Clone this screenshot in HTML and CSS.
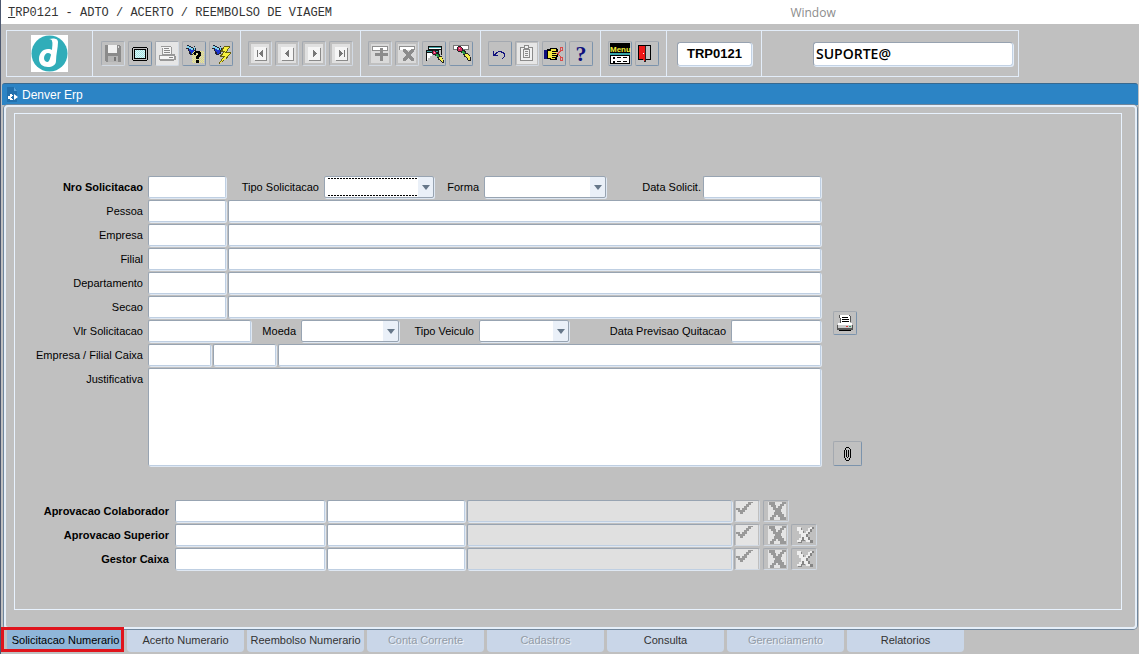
FILE: index.html
```
<!DOCTYPE html>
<html lang="pt-BR">
<head>
    <meta charset="UTF-8">
    <meta name="viewport" content="width=device-width, initial-scale=1.0">
    <title>TRP0121 - Adto / Acerto / Reembolso de Viagem</title>
    <link rel="stylesheet" href="styles.css">
</head>
<body>

    <!-- shared icon parts -->
    <svg class="symbols" aria-hidden="true">
        <defs>
            <symbol id="torch" viewBox="0 0 11 11">
                <path fill="#223" d="M1 0h2v1h2v1h2v1h1V1h1v2h1v3H9v3H7v1H4V9H3V6H2V4H0V3h1z"/>
                <path fill="#7fd4f0" d="M1 1h2v1h2v1h2v2H5V4H3V3H1zM8 2h1v3H8z"/>
                <path fill="#1c35d0" d="M3 4h2v1h3v3H7v1H5V7H4V6H3z"/>
            </symbol>
            <symbol id="pencil" viewBox="0 0 16 16">
                <path fill="#222" d="M2 0h3v1h1v1h1v2h2v1h1v2h2v1h1v1h1v2h1v4h-3v-1h-1v-2h-1v-1H8V9H7V7H5V6H2V5H1V1h1z"/>
                <path fill="#d8255c" d="M2 1h3v1h1v3H2z"/>
                <path fill="#f7b0c8" d="M3 2h1v1H3z"/>
                <path fill="#25a045" d="M6 5h2v1h1v2H7V7H6z"/>
                <path fill="#f4f04a" d="M9 8h3v1h1v1h1v4h-2v-2h-1v-1h-1v-1H9z"/>
            </symbol>
            <symbol id="check" viewBox="0 0 22 20">
                <path fill="#e4e4e4" d="M0 0h22v20H0z"/>
                <path fill="#999" d="M0 7h4v2h2V7h2V5h2V3h2V1h5v1h-2v2h-2v2h-2v3H9v2H7v2H4v-2H2v-2H0z"/>
            </symbol>
            <symbol id="cross" viewBox="0 0 22 20">
                <path fill="#e4e4e4" d="M3 1h18v18H3z"/>
                <path fill="#999" d="M4 1h6v3h1v3h2V5h2V3h2V1h4v2h-2v2h-2v3h-1v3h1v2h2v3h2v3h-6v-3h-2v-2h-2v2h-2v3H5v-3h2v-2h2v-3h1V9H8V6H6V4H4z"/>
            </symbol>
            <symbol id="crossLight" viewBox="0 0 22 20">
                <path fill="#858585" d="M5 3h4v3h2v3h3V7h2V4h2V2h3v2h-2v3h-2v2h-2v3h2v3h3v3h-3v-2h-3v-3h-2v3H9v2H5v-3h2v-2h2V9H7V6H5z"/>
                <path fill="#eee" d="M4 2h4v3h2v3h3V6h2V3h2V2h2v2h-2v3h-2v2h-2v3h2v3h2v2h-4v-2h-2v-3h-2v3H8v2H4v-2h2v-2h2V9H6V6H4z"/>
            </symbol>
        </defs>
    </svg>

    <header class="menubar">
        <a href="#" class="menu-title"><u>T</u>RP0121 - ADTO / ACERTO / REEMBOLSO DE VIAGEM</a>
        <a href="#" class="menu-window">Window</a>
    </header>

    <div class="toolbar">
        <div class="toolbar-box">
            <div class="logo-cell">
                <svg class="logo" viewBox="0 0 37 37" role="img" aria-label="Denver">
                    <circle cx="18.500" cy="18.500" r="18" fill="#30adb9"/>
                    <path fill="#fff" d="M18 4c4-1 9-1 9 3 0 6-2 12-2 19 0 4-4 6-8 6-5 0-9-3-9-8 0-6 4-10 9-10 2 0 3 0 4 1 0-3 1-7 0-9 0-1-1-2-3-2z"/>
                    <path fill="#30adb9" d="M17 18c2 0 3 1 3 2-1 3-1 5-3 7-3 0-4-2-4-4 0-3 2-5 4-5z"/>
                </svg>
            </div>
            <div class="tool-group">
                <button class="tool" aria-label="Salvar" disabled>
                    <svg viewBox="0 0 22 23"><path fill="#8b8b8b" d="M3 3h15v1h1v16H4v-1H3z"/><path fill="#f1f1f1" d="M6 3h9v8H6z"/><path fill="#b5b5b5" d="M6 14h10v6H6z"/><path fill="#777" d="M12 15h2v4h-2z"/><path fill="#ddd" d="M16 4h1v2h-1z"/></svg>
                </button>
                <button class="tool" aria-label="Tela">
                    <svg viewBox="0 0 22 23"><path d="M4 5h14v1h1v12h-1v1H4v-1H3V6h1z"/><path fill="#c0c0c0" d="M4 6h14v12H4z"/><path d="M5 7h12v10H5z"/><path fill="#9fe0e2" d="M6 8h10v8H6z"/><path fill="none" stroke="#dff6f6" stroke-dasharray="1 1" d="M6 8.500h10M7 9.500h9M6 10.500h10M7 11.500h9M6 12.500h10M7 13.500h9M6 14.500h10M7 15.500h9"/></svg>
                </button>
                <button class="tool" aria-label="Imprimir" disabled>
                    <svg viewBox="0 0 22 23"><path fill="#e6e6e6" d="M0 0h22v23H0z"/><path fill="#999" d="M5 4h10v1h1v7h3v2h1v4h-2v1H4v-1H3v-5h3V5H5z"/><path fill="#f6f6f6" d="M6 5h9v7H7V6H6zM4 14h14v3H4z"/><path fill="#888" d="M8 6h5v1H8zM8 8h6v1H8zM8 10h6v1H8zM13 15h4v1h-4z"/></svg>
                </button>
                <button class="tool" aria-label="Entrar consulta">
                    <svg viewBox="0 0 22 23"><use href="#torch" x="3" y="3" width="11" height="11"/><path fill="none" stroke="#f4ef7a" stroke-dasharray="1 1" d="M11 9.500h10M10 10.500h11M9 11.500h12M10 12.500h11M9 13.500h12M10 14.500h11M9 15.500h12M10 16.500h11M9 17.500h12M10 18.500h11M9 19.500h12M10 20.500h11"/><path d="M11 10h1V9h5v1h1v4h-1v1h-1v2h-3v-3h1v-1h1v-2h-2v2h-2zM13 18h3v3h-3z"/></svg>
                </button>
                <button class="tool" aria-label="Executar consulta">
                    <svg viewBox="0 0 22 23"><use href="#torch" x="2" y="3" width="11" height="11"/><path fill="#665f10" d="M14 4h6v1l-3 5h4v1l-4 4h2l-10 7v-1l4-6h-3v-1l3-4H11v-1z"/><path fill="#f8f03c" d="M14 5h5l-4 6h5l-5 5h2l-7 5 5-7h-3l3-5h-2z"/></svg>
                </button>
            </div>
            <div class="tool-group">
                <button class="tool" aria-label="Primeiro" disabled>
                    <svg viewBox="0 0 22 23"><path fill="#e0e0e0" d="M2 2h18v19H2z"/><path fill="#8a8a8a" d="M6 18h11V6h1v13H6z"/><path fill="#f5f5f5" d="M5 5h12v13H5z"/><path fill="#777" d="M8 8h1v7H8zM14 8v7h-1v-1h-1v-1h-1v-1h-1v-1h1v-1h1V9h1V8z"/></svg>
                </button>
                <button class="tool" aria-label="Anterior" disabled>
                    <svg viewBox="0 0 22 23"><path fill="#e0e0e0" d="M2 2h18v19H2z"/><path fill="#8a8a8a" d="M6 18h11V6h1v13H6z"/><path fill="#f5f5f5" d="M5 5h12v13H5z"/><path fill="#777" d="M13 8v7h-1v-1h-1v-1h-1v-1H9v-1h1v-1h1V9h1V8z"/></svg>
                </button>
                <button class="tool" aria-label="Proximo" disabled>
                    <svg viewBox="0 0 22 23"><path fill="#e0e0e0" d="M2 2h18v19H2z"/><path fill="#8a8a8a" d="M6 18h11V6h1v13H6z"/><path fill="#f5f5f5" d="M5 5h12v13H5z"/><path fill="#777" d="M10 8v7h1v-1h1v-1h1v-1h1v-1h-1v-1h-1V9h-1V8z"/></svg>
                </button>
                <button class="tool" aria-label="Ultimo" disabled>
                    <svg viewBox="0 0 22 23"><path fill="#e0e0e0" d="M2 2h18v19H2z"/><path fill="#8a8a8a" d="M6 18h11V6h1v13H6z"/><path fill="#f5f5f5" d="M5 5h12v13H5z"/><path fill="#777" d="M14 8h1v7h-1zM9 8v7h1v-1h1v-1h1v-1h1v-1h-1v-1h-1V9h-1V8z"/></svg>
                </button>
            </div>
            <div class="tool-group">
                <button class="tool" aria-label="Inserir" disabled>
                    <svg viewBox="0 0 22 23"><path fill="#dadada" d="M2 2h18v19H2z"/><path fill="#8f8f8f" d="M3 4h16v5H3z"/><path fill="#fff" d="M4 5h14v3H4z"/><path fill="#8c8c8c" d="M11 6h3v5h5v3h-5v5h-3v-5H6v-3h5z"/></svg>
                </button>
                <button class="tool" aria-label="Remover" disabled>
                    <svg viewBox="0 0 22 23"><path fill="#dadada" d="M2 2h18v19H2z"/><path fill="#8f8f8f" d="M3 4h16v4H3z"/><path fill="#fff" d="M4 5h14v3H4z"/><path fill="#8c8c8c" d="M7 7h3v1h1v1h1v1h1V9h1V8h1V7h3v3h-1v1h-1v1h-1v2h1v1h1v1h1v3h-3v-1h-1v-1h-1v-1h-1v1h-1v1h-1v1H7v-3h1v-1h1v-1h1v-2H9v-1H8v-1H7z"/></svg>
                </button>
                <button class="tool" aria-label="Limpar bloco">
                    <svg viewBox="0 0 22 23"><path fill="#111" d="M5 4h14v9h-1V8H5zM3 8h13v4H3zM3 12h1v7H3z"/><path fill="#3fa5a6" d="M6 5h12v1H6zM4 9h11v1H4z"/><path fill="#fff" d="M6 6h12v1H6zM4 11h9v1H9v2H7v2H5v2H4z"/><use href="#pencil" x="8" y="8" width="14" height="14"/></svg>
                </button>
                <button class="tool" aria-label="Limpar registro">
                    <svg viewBox="0 0 22 23"><path fill="#777" d="M3 3h16v5H3z"/><path fill="#fff" d="M4 4h14v3H4z"/><use href="#pencil" x="6" y="4" width="16" height="16"/></svg>
                </button>
            </div>
            <div class="tool-group">
                <button class="tool" aria-label="Desfazer">
                    <svg viewBox="0 0 22 23"><path fill="#10107c" d="M4 9h1v3h1v-1h1v-1h2V9h4v1h2v1h1v4h-1v1h-1v1h-1v-1h1v-1h1v-3h-1v-1h-2v-1h-3v1H8v1H7v1h2v1H4z"/></svg>
                </button>
                <button class="tool" aria-label="Colar" disabled>
                    <svg viewBox="0 0 22 23"><path fill="#e6e6e6" d="M1 1h20v21H1z"/><path fill="#8b8b8b" d="M4 5h4V3h5v2h4v14H4z"/><path fill="#f2f2f2" d="M5 6h3v2h5V6h3v12H5zM9 4h3v2H9z"/><path fill="#8b8b8b" d="M7 7h7v9H7z"/><path fill="#f2f2f2" d="M8 8h5v7H8z"/><path fill="#8b8b8b" d="M9 9h3v1H9zM9 11h3v1H9zM9 13h3v1H9z"/></svg>
                </button>
                <button class="tool" aria-label="Lista de valores">
                    <svg viewBox="0 0 22 23"><path fill="#10107c" d="M1 8h3v9H1z"/><path d="M4 7h3V6h7v1h1v3h-1v2h1v3h-1v3H7v-1H4z"/><path fill="#f2e640" d="M5 9h3V7h5v2H9v1h5v1H9v1h5v1H9v1h4v1H9v1h3v1H8v-1H5z"/><path fill="none" stroke="#d94a4a" d="M13 11.500h2l3-3M15 11.500l3 4M17.500 5.500h2v3h-2zM17.500 15.500h2v3h-2z"/></svg>
                </button>
                <button class="tool tool-help" aria-label="Ajuda">?</button>
            </div>
            <div class="tool-group">
                <button class="tool" aria-label="Menu">
                    <svg viewBox="0 0 22 23"><path d="M1 1h20v10H1z"/><text class="menu-glyph" x="1" y="10">Menu</text><path fill="#35a5a8" d="M1 11h20v2H1z"/><path d="M1 13h20v9H1z"/><path fill="#fff" d="M2 14h18v7H2z"/><path d="M4 15h2v2H4zM8 15h4v1H8zM14 15h4v1h-4zM4 19h2v2H4zM8 19h4v1H8zM14 19h4v1h-4z"/></svg>
                </button>
                <button class="tool" aria-label="Sair">
                    <svg viewBox="0 0 22 23"><path d="M2 3h13v15H2z"/><path fill="#c0c0c0" d="M9 4h5v13H9z"/><path fill="#222" d="M8 4h2v16H8z"/><path fill="#ee1717" d="M3 4h5l1 1v14H8l-2-2H3z"/><path fill="#fff" d="M7 11h1v1H7z"/></svg>
                </button>
            </div>
            <div class="code-cell">
                <input type="text" class="tool-input" aria-label="Programa" value="TRP0121">
            </div>
            <div class="user-cell">
                <input type="text" class="tool-input user-input" aria-label="Usuario" value="SUPORTE@">
            </div>
        </div>
    </div>

    <div class="titlebar">
        <svg class="title-icon" viewBox="0 0 12 15"><path fill="#2270ad" d="M0 0h7l3 3v12H0z"/><path fill="#5aa4da" d="M7 0l3 4H7z"/><path fill="#fff" d="M3 7h2v1h1v1H5v1H4v1h1v1h1v1H3v-1H1V9h2zM7 7l4 3-4 3z"/></svg>
        <span>Denver Erp</span>
    </div>

    <main class="window">
        <form class="panel">
            <div class="request">
                <div class="rows">
                    <div class="row">
                        <label class="label bold" for="nro">Nro Solicitacao</label>
                        <input type="text" class="field code" id="nro">
                        <label class="mid-label w98" for="tipo">Tipo Solicitacao</label>
                        <select class="field select-110 focused" id="tipo"><option></option></select>
                        <label class="mid-label w50" for="forma">Forma</label>
                        <select class="field select-122" id="forma"><option></option></select>
                        <label class="mid-label push narrow-gap" for="dataSolicit">Data Solicit.</label>
                        <input type="text" class="field date-118" id="dataSolicit">
                    </div>
                    <div class="row">
                        <label class="label" for="pessoa">Pessoa</label>
                        <input type="text" class="field code" id="pessoa">
                        <input type="text" class="field grow" aria-label="Nome da pessoa">
                    </div>
                    <div class="row">
                        <label class="label" for="empresa">Empresa</label>
                        <input type="text" class="field code" id="empresa">
                        <input type="text" class="field grow" aria-label="Nome da empresa">
                    </div>
                    <div class="row">
                        <label class="label" for="filial">Filial</label>
                        <input type="text" class="field code" id="filial">
                        <input type="text" class="field grow" aria-label="Nome da filial">
                    </div>
                    <div class="row">
                        <label class="label" for="depto">Departamento</label>
                        <input type="text" class="field code" id="depto">
                        <input type="text" class="field grow" aria-label="Nome do departamento">
                    </div>
                    <div class="row">
                        <label class="label" for="secao">Secao</label>
                        <input type="text" class="field code" id="secao">
                        <input type="text" class="field grow" aria-label="Nome da secao">
                    </div>
                    <div class="row">
                        <label class="label" for="vlr">Vlr Solicitacao</label>
                        <input type="text" class="field value" id="vlr">
                        <label class="mid-label w50" for="moeda">Moeda</label>
                        <select class="field select-98" id="moeda"><option></option></select>
                        <label class="mid-label w80" for="veiculo">Tipo Veiculo</label>
                        <select class="field select-90" id="veiculo"><option></option></select>
                        <label class="mid-label push" for="dataPrev">Data Previsao Quitacao</label>
                        <input type="text" class="field date-90" id="dataPrev">
                    </div>
                    <div class="row">
                        <label class="label" for="caixa">Empresa / Filial Caixa</label>
                        <input type="text" class="field small" id="caixa">
                        <input type="text" class="field small" aria-label="Filial caixa">
                        <input type="text" class="field grow" aria-label="Nome do caixa">
                    </div>
                    <div class="row row-area">
                        <label class="label" for="just">Justificativa</label>
                        <textarea class="field grow" id="just"></textarea>
                    </div>
                </div>
                <div class="side">
                    <button type="button" class="side-button" aria-label="Imprimir solicitacao">
                        <svg viewBox="0 0 22 22"><path fill="#555" d="M5 3h11v1h1v6h-1v1H6V6H5z"/><path fill="#fff" d="M6 3h9v1h1v7H7V6H6z"/><path d="M8 5h6v1H8zM8 7h7v1H8zM8 9h7v1H8z"/><path fill="#fff" d="M4 11h14v2H4z"/><path fill="#555" d="M3 13h16v5H3z"/><path fill="#ccc" d="M4 13h14v3H4z"/><path fill="#d33" d="M12 14h2v1h-2z"/><path fill="#396" d="M15 14h2v1h-2z"/><path d="M5 18h12v1H5z"/></svg>
                    </button>
                    <button type="button" class="side-button clip" aria-label="Anexar">
                        <svg viewBox="0 0 22 22"><path d="M10 4h3v1h1v1h1v9h-1v2h-1v1h-3v-1H9v-2H8V7h1v8h1v2h3v-2h1V6h-1V5h-3zM9 5h1v2H9zM10 7h1v7h-1zM12 7h1v7h-1zM11 14h1v1h-1z"/></svg>
                    </button>
                </div>
            </div>

            <div class="approvals">
                <div class="row">
                    <label class="label bold" for="apColab">Aprovacao Colaborador</label>
                    <input type="text" class="field ap-user" id="apColab">
                    <input type="text" class="field ap-date" aria-label="Data aprovacao colaborador">
                    <input type="text" class="field grow" aria-label="Nome do colaborador" disabled>
                    <div class="actions">
                        <button type="button" class="action" aria-label="Aprovar" disabled><svg viewBox="0 0 22 20"><use href="#check"/></svg></button>
                        <button type="button" class="action" aria-label="Reprovar" disabled><svg viewBox="0 0 22 20"><use href="#cross"/></svg></button>
                    </div>
                </div>
                <div class="row">
                    <label class="label bold" for="apSup">Aprovacao Superior</label>
                    <input type="text" class="field ap-user" id="apSup">
                    <input type="text" class="field ap-date" aria-label="Data aprovacao superior">
                    <input type="text" class="field grow" aria-label="Nome do superior" disabled>
                    <div class="actions">
                        <button type="button" class="action" aria-label="Aprovar" disabled><svg viewBox="0 0 22 20"><use href="#check"/></svg></button>
                        <button type="button" class="action" aria-label="Reprovar" disabled><svg viewBox="0 0 22 20"><use href="#cross"/></svg></button>
                        <button type="button" class="action" aria-label="Cancelar" disabled><svg viewBox="0 0 22 20"><use href="#crossLight"/></svg></button>
                    </div>
                </div>
                <div class="row">
                    <label class="label bold" for="gestor">Gestor Caixa</label>
                    <input type="text" class="field ap-user" id="gestor">
                    <input type="text" class="field ap-date" aria-label="Data gestor caixa">
                    <input type="text" class="field grow" aria-label="Nome do gestor" disabled>
                    <div class="actions">
                        <button type="button" class="action" aria-label="Aprovar" disabled><svg viewBox="0 0 22 20"><use href="#check"/></svg></button>
                        <button type="button" class="action" aria-label="Reprovar" disabled><svg viewBox="0 0 22 20"><use href="#cross"/></svg></button>
                        <button type="button" class="action" aria-label="Cancelar" disabled><svg viewBox="0 0 22 20"><use href="#crossLight"/></svg></button>
                    </div>
                </div>
            </div>
        </form>
    </main>

    <nav class="tabs">
        <button class="tab active">Solicitacao Numerario</button>
        <button class="tab">Acerto Numerario</button>
        <button class="tab">Reembolso Numerario</button>
        <button class="tab" disabled>Conta Corrente</button>
        <button class="tab" disabled>Cadastros</button>
        <button class="tab">Consulta</button>
        <button class="tab" disabled>Gerenciamento</button>
        <button class="tab">Relatorios</button>
    </nav>

</body>
</html>
```
FILE: styles.css
```
* {
    box-sizing: border-box;
}
body {
    margin: 0;
    min-height: 100vh;
    display: flex;
    flex-direction: column;
    background-color: #c0c0c0;
    border-left: 1px solid #4c5870;
    font-family: "Liberation Sans", Arial, sans-serif;
    font-size: 11px;
    color: #000;
}
button, input, select, textarea {
    font: inherit;
    color: inherit;
    margin: 0;
}
.symbols {
    position: absolute;
    width: 0;
    height: 0;
}

/* menu */
.menubar {
    display: grid;
    grid-template-columns: 69% 1fr;
    align-items: center;
    height: 24px;
    padding: 1px 0 0 7px;
    background-color: #fff;
}
.menubar a {
    color: #333;
    text-decoration: none;
}
.menubar .menu-title {
    font-family: "Liberation Mono", "Courier New", monospace;
    font-size: 12px;
}
.menubar .menu-window {
    padding-left: 2px;
    font-family: "Open Sans", sans-serif;
    font-size: 12px;
    color: #8c8c8c;
}

/* toolbar */
.toolbar {
    padding: 6px 5px;
}
.toolbar-box {
    display: flex;
    width: 89%;
    min-width: 1013px;
    height: 47px;
    border: 1px solid #e3edf9;
}
.logo-cell {
    width: 85px;
    display: flex;
    align-items: center;
    justify-content: center;
}
.logo {
    width: 37px;
    height: 37px;
    background-color: #fff;
}
.tool-group {
    display: flex;
    align-items: center;
    gap: 3px;
    padding: 0 7px 0 8px;
    border-left: 1px solid #e3edf9;
}
.tool-group + .tool-group {
    padding: 0 7px;
}
.tool {
    width: 24px;
    height: 25px;
    padding: 0;
    background-color: #c0c0c0;
    border: 1px solid;
    border-color: #a4a9b0 #7b93ac #7b93ac #a4a9b0;
    border-radius: 2px;
}
.tool:disabled {
    border-color: #a4a9b0 #d2dae4 #d2dae4 #a4a9b0;
}
.tool svg {
    display: block;
    width: 22px;
    height: 23px;
    shape-rendering: crispEdges;
}
.tool-help {
    font: bold 22px/22px "Liberation Serif", serif;
    color: #10107c;
}
.menu-glyph {
    font: bold 8px "Liberation Sans", sans-serif;
    fill: #f2ee3a;
}
.code-cell {
    width: 95px;
    display: flex;
    align-items: center;
    padding: 0 9px 0 10px;
    border-left: 1px solid #e3edf9;
}
.user-cell {
    flex: 1;
    display: flex;
    align-items: center;
    padding: 0 5px 0 51px;
    border-left: 1px solid #e3edf9;
}
.tool-input {
    width: 100%;
    height: 24px;
    padding: 0 2px;
    background-color: #fff;
    border: 1px solid;
    border-color: #97a2b0 #c3d2e4 #c3d2e4 #97a2b0;
    border-radius: 3px;
    box-shadow: 1px 1px 0 #e3edf9;
    font-size: 13px;
    font-weight: bold;
    text-align: center;
}
.user-input {
    font-family: "Open Sans", sans-serif;
    font-size: 14px;
    font-weight: 600;
    text-align: left;
}

/* window */
.titlebar {
    display: flex;
    align-items: center;
    gap: 3px;
    height: 22px;
    margin: 0 1px;
    padding: 0 5px;
    background-color: #2c84c5;
    border-top: 1px solid #38698f;
    border-radius: 3px 3px 0 0;
    font-size: 12px;
    color: #fff;
}
.title-icon {
    width: 12px;
    height: 15px;
}
.window {
    flex: 1;
    display: flex;
    margin: 0 2px 0 3px;
    padding: 6px 13px 17px 8px;
    border: 2px solid #e6eff9;
    border-radius: 4px;
    box-shadow: 0 0 0 1px #71879d;
}
.panel {
    flex: 1;
    padding: 62px 0 37px;
    border: 1px solid #e8f2fe;
}
.request {
    display: flex;
    margin-right: 259px;
}
.rows {
    flex: 1;
    display: flex;
    flex-direction: column;
    gap: 2px;
}
.row {
    display: flex;
    align-items: center;
    gap: 2px;
}
.row-area {
    align-items: flex-start;
}
.label {
    width: 131px;
    padding-right: 3px;
    line-height: 22px;
    text-align: right;
    white-space: nowrap;
}
.bold {
    font-weight: bold;
}
.mid-label {
    margin: 0 -2px;
    padding-right: 5px;
    text-align: right;
    white-space: nowrap;
}
.w50 {
    width: 50px;
}
.w80 {
    width: 80px;
}
.w98 {
    width: 98px;
}
.push {
    margin-left: auto;
}
.narrow-gap {
    padding-right: 2px;
}
.field {
    height: 22px;
    padding: 0 3px;
    background-color: #fff;
    border: 1px solid;
    border-color: #98a4b2 #bfcfe2 #bfcfe2 #98a4b2;
    border-radius: 2px;
    box-shadow: 1px 1px 0 #dfe8f3;
    outline: none;
}
.field:disabled {
    background-color: #e0e0e0;
}
.grow {
    flex: 1;
    min-width: 0;
}
.code {
    width: 78px;
}
.small {
    width: 63px;
}
.value {
    width: 103px;
}
.date-118 {
    width: 118px;
}
.date-90 {
    width: 90px;
}
textarea.field {
    height: 98px;
    resize: none;
}
select.field {
    appearance: none;
    border-color: #98a4b2;
    background-image: url("data:image/svg+xml,%3Csvg xmlns='http://www.w3.org/2000/svg' width='15' height='20'%3E%3Crect width='15' height='20' fill='%23eaf0f8'/%3E%3Cpath d='M4 8h8l-4 5z' fill='%23667789'/%3E%3C/svg%3E");
    background-repeat: no-repeat;
    background-position: right center;
}
select.focused {
    background-image:
        repeating-linear-gradient(to right, #000 0 2px, transparent 2px 3px),
        repeating-linear-gradient(to right, #000 0 2px, transparent 2px 3px),
        url("data:image/svg+xml,%3Csvg xmlns='http://www.w3.org/2000/svg' width='15' height='20'%3E%3Crect width='15' height='20' fill='%23eaf0f8'/%3E%3Cpath d='M4 8h8l-4 5z' fill='%23667789'/%3E%3C/svg%3E");
    background-size: calc(100% - 18px) 1px, calc(100% - 18px) 1px, 15px 20px;
    background-position: 3px 1px, 3px 18px, right center;
}
.select-90 {
    width: 90px;
}
.select-98 {
    width: 98px;
}
.select-110 {
    width: 110px;
}
.select-122 {
    width: 122px;
}

/* buttons beside the form */
.side {
    width: 41px;
    padding: 135px 0 0 12px;
    display: flex;
    flex-direction: column;
    justify-content: space-between;
}
.side-button {
    width: 24px;
    height: 24px;
    padding: 0;
    background-color: #c0c0c0;
    border: 1px solid;
    border-color: #a4a9b0 #7b93ac #7b93ac #a4a9b0;
    border-radius: 2px;
}
.side-button.clip {
    width: 29px;
    height: 25px;
}
.side-button svg {
    display: block;
    width: 22px;
    height: 22px;
    margin: auto;
    shape-rendering: crispEdges;
}
.side-button.clip svg {
    margin: 0 2px;
}

/* approvals */
.approvals {
    display: flex;
    flex-direction: column;
    gap: 2px;
    margin: 34px 304px 0 0;
}
.approvals .label {
    width: 158px;
    padding-right: 4px;
}
.ap-user {
    width: 150px;
}
.ap-date {
    width: 138px;
}
.actions {
    width: 83px;
    display: flex;
    gap: 3px;
}
.action {
    width: 26px;
    height: 22px;
    padding: 0;
    background-color: #c0c0c0;
    border: 1px solid;
    border-color: #a4a9b0 #d2dae4 #d2dae4 #a4a9b0;
    border-radius: 2px;
}
.action svg {
    display: block;
    width: 22px;
    height: 20px;
    margin: auto;
    shape-rendering: crispEdges;
}

/* tabs */
.tabs {
    display: flex;
    gap: 3px;
    height: 25px;
    padding: 1px 0 2px 6px;
}
.tab {
    width: 117px;
    padding: 0 0 2px;
    background-color: #c9d6e8;
    border: none;
    border-radius: 0 0 4px 4px;
    color: #333;
    white-space: nowrap;
}
.tab:disabled {
    color: #929ba6;
    text-shadow: 1px 1px 0 #eef3f9;
}
.tab.active {
    position: relative;
    background-color: #8fb6d9;
    color: #000;
}
/* red mark round the current tab */
.tab.active::after {
    content: "";
    position: absolute;
    inset: -3px 0 0 -6px;
    border: 3px solid #e0141c;
}
```
